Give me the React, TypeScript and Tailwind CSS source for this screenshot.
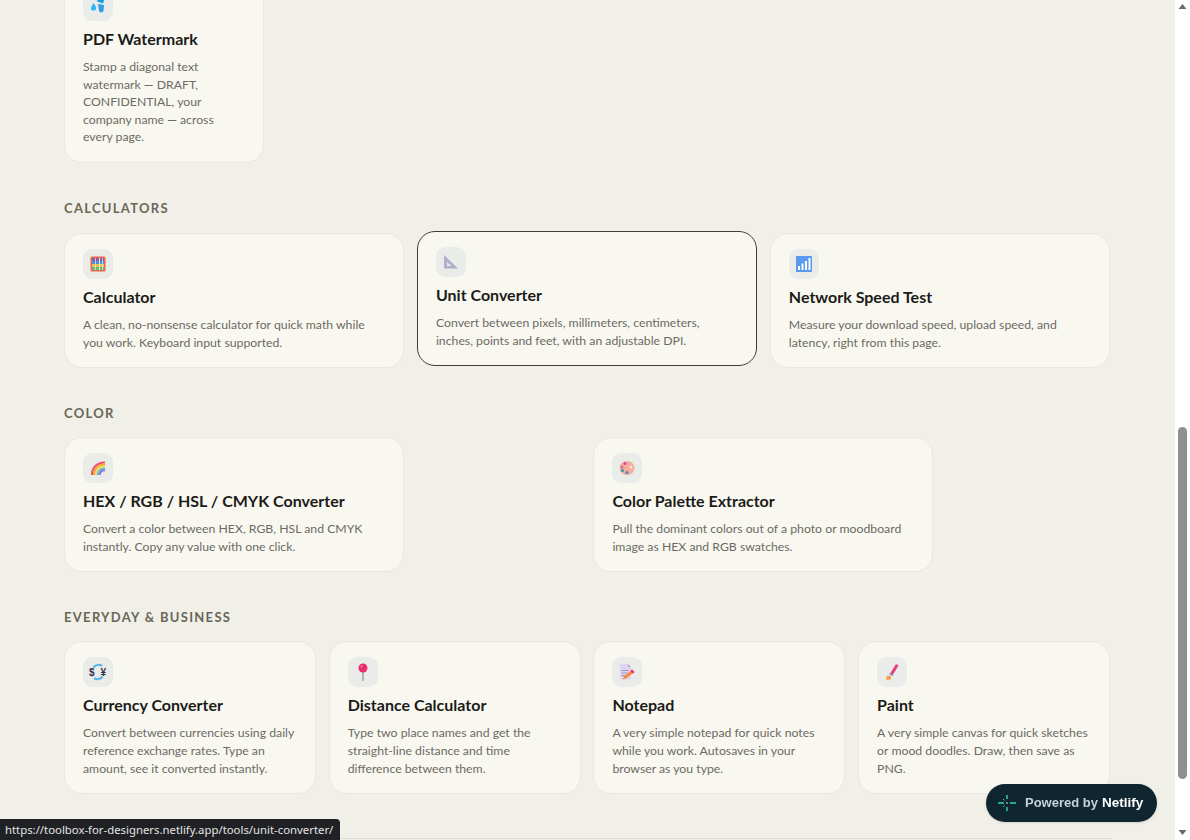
import React from "react";

type Tool = { icon: React.ReactNode; title: string; desc: string; hovered?: boolean };

const Drop = () => (
  <svg width="18" height="18" viewBox="0 0 18 18">
    <path d="M9.500 0 L15.500 1.500 L14 6.500 L8 4.500 Z" fill="#1e9be8" />
    <path d="M4.500 6 C6 8 7.500 10 7 12 C6.500 14 2.500 14 2 12 C1.800 10 3.500 8 4.500 6 Z" fill="#2db4f5" />
    <path d="M9 7 L15 8 L14.500 14 C13.500 16 10.500 15.500 10 14 Z" fill="#2f9fe8" />
  </svg>
);

const Abacus = () => (
  <svg width="16" height="16" viewBox="0 0 16 16">
    <rect x="0.500" y="0.500" width="15" height="15" rx="1.500" fill="#f0654a" />
    <rect x="2" y="2" width="12" height="3" fill="#8c5aa6" />
    <rect x="2" y="5" width="12" height="3" fill="#4a90dc" />
    <rect x="2" y="8" width="12" height="3" fill="#eebf4a" />
    <rect x="2" y="11" width="12" height="3" fill="#67bd78" />
    <rect x="9" y="2" width="1" height="12" fill="#f4ece4" />
    <rect x="5" y="2" width="1" height="12" fill="#f4ece4" opacity="0.700" />
    <rect x="12" y="2" width="1" height="12" fill="#f4ece4" opacity="0.700" />
  </svg>
);

const SetSquare = () => (
  <svg width="16" height="16" viewBox="0 0 16 16">
    <path fillRule="evenodd" d="M1 1 L15 14.500 L1 14.500 Z M4 8 L4 12 L8.500 12 Z" fill="#b0aecb" />
  </svg>
);

const Signal = () => (
  <svg width="16" height="16" viewBox="0 0 16 16">
    <rect width="16" height="16" fill="#5a9bee" />
    <rect x="2" y="10" width="2" height="4" fill="#fff" />
    <rect x="5.500" y="7.500" width="2" height="6.500" fill="#fff" />
    <rect x="9" y="5" width="2" height="9" fill="#fff" />
    <rect x="12.500" y="2" width="2" height="12" fill="#fff" />
  </svg>
);

const Rainbow = () => (
  <svg width="16" height="14" viewBox="0 0 16 14" fill="none">
    <path d="M2 14 A12 12 0 0 1 15 1.500" stroke="#ef4f6c" strokeWidth="2" />
    <path d="M4 14 A10 10 0 0 1 15 3.500" stroke="#f7a23b" strokeWidth="2" />
    <path d="M6 14 A8 8 0 0 1 15 5.500" stroke="#f5dc4a" strokeWidth="2" />
    <path d="M8 14 A6 6 0 0 1 15 7.500" stroke="#58c2dc" strokeWidth="2" />
    <path d="M10 14 A4 4 0 0 1 15 9.500" stroke="#9a6cd8" strokeWidth="2" />
  </svg>
);

const Palette = () => (
  <svg width="16" height="16" viewBox="0 0 16 16">
    <ellipse cx="8" cy="8" rx="7.500" ry="7" fill="#f5ad98" />
    <circle cx="12" cy="7" r="1.500" fill="#fbe8e0" />
    <circle cx="6" cy="3.500" r="1.500" fill="#d447a8" />
    <circle cx="3" cy="7" r="1.500" fill="#d06ab0" />
    <circle cx="3.500" cy="10.500" r="1.500" fill="#2e9e98" />
    <circle cx="8" cy="12.500" r="1.500" fill="#4a80d8" />
  </svg>
);

const Currency = () => (
  <svg width="18" height="18" viewBox="0 0 18 18" fill="none">
    <path d="M4.500 4.500 A6.500 6.500 0 0 1 13 2.800" stroke="#55b4ee" strokeWidth="2.200" />
    <path d="M13.500 13.500 A6.500 6.500 0 0 1 5 15.200" stroke="#55b4ee" strokeWidth="2.200" />
    <text x="0" y="12.500" fontSize="10" fontWeight="700" fontFamily="Liberation Sans, sans-serif" fill="#37304a">$</text>
    <text x="11.500" y="12.500" fontSize="10" fontWeight="700" fontFamily="Liberation Sans, sans-serif" fill="#37304a">¥</text>
  </svg>
);

const Pin = () => (
  <svg width="16" height="18" viewBox="0 0 16 18">
    <rect x="7.200" y="7" width="1.600" height="11" fill="#a3a3ad" />
    <circle cx="8" cy="5" r="4.500" fill="#ec2a6e" />
    <circle cx="6.500" cy="3.500" r="1" fill="#f98aae" />
  </svg>
);

const Memo = () => (
  <svg width="16" height="18" viewBox="0 0 16 18">
    <path d="M1 1 H9 L12 4 V16.500 H1 Z" fill="#ded6ee" />
    <path d="M9 1 L12 4 H9 Z" fill="#b5aad0" />
    <rect x="2.500" y="7" width="7" height="1" fill="#9f8fc8" />
    <rect x="2.500" y="9.500" width="6" height="1" fill="#9f8fc8" />
    <rect x="2.500" y="12" width="4" height="1" fill="#9f8fc8" />
    <path d="M3.500 16.500 L5 13.500 L12.500 7 L15 9.500 L7 15.500 Z" fill="#f58a3c" />
    <path d="M11.500 8 L13 6.500 L15.500 9 L14 10.500 Z" fill="#ec2a6e" />
  </svg>
);

const Brush = () => (
  <svg width="16" height="18" viewBox="0 0 16 18">
    <path d="M6.500 10 L12 1 L14.500 2.500 L9 11.500 Z" fill="#ec3a78" />
    <path d="M5 11 L6.500 9.500 L9.500 11.500 L8.500 13 Z" fill="#8a8a9a" />
    <path d="M2 17 L3 12.500 L7 13 L7 16.500 Z" fill="#f5a04a" />
  </svg>
);

const sections: { name: string; grid: string; headMb: string; tools: Tool[] }[] = [
  {
    name: "Calculators",
    grid: "grid-cols-3",
    headMb: "mb-[17px]",
    tools: [
      { icon: <Abacus />, title: "Calculator", desc: "A clean, no-nonsense calculator for quick math while you work. Keyboard input supported." },
      { icon: <SetSquare />, title: "Unit Converter", desc: "Convert between pixels, millimeters, centimeters, inches, points and feet, with an adjustable DPI.", hovered: true },
      { icon: <Signal />, title: "Network Speed Test", desc: "Measure your download speed, upload speed, and latency, right from this page." },
    ],
  },
  {
    name: "Color",
    grid: "grid-cols-2",
    headMb: "mb-[16px]",
    tools: [
      { icon: <Rainbow />, title: "HEX / RGB / HSL / CMYK Converter", desc: "Convert a color between HEX, RGB, HSL and CMYK instantly. Copy any value with one click." },
      { icon: <Palette />, title: "Color Palette Extractor", desc: "Pull the dominant colors out of a photo or moodboard image as HEX and RGB swatches." },
    ],
  },
  {
    name: "Everyday & Business",
    grid: "grid-cols-4",
    headMb: "mb-[16px]",
    tools: [
      { icon: <Currency />, title: "Currency Converter", desc: "Convert between currencies using daily reference exchange rates. Type an amount, see it converted instantly." },
      { icon: <Pin />, title: "Distance Calculator", desc: "Type two place names and get the straight-line distance and time difference between them." },
      { icon: <Memo />, title: "Notepad", desc: "A very simple notepad for quick notes while you work. Autosaves in your browser as you type." },
      { icon: <Brush />, title: "Paint", desc: "A very simple canvas for quick sketches or mood doodles. Draw, then save as PNG." },
    ],
  },
];

function ToolCard({ tool, className }: { tool: Tool; className: string }) {
  return (
    <div
      className={`rounded-[18px] border bg-[#f8f8f1] px-[18px] pt-[15px] pb-[16px] ${
        tool.hovered ? "-translate-y-[2px] border-[#3f3d38]" : "border-[#e9e8de]"
      } ${className}`}
    >
      <div className="mb-[6px] flex h-[30px] w-[30px] items-center justify-center rounded-[9px] bg-[#e9ece8]">{tool.icon}</div>
      <h3 className="mb-[7px] text-[16px] leading-[24px] font-bold text-[#1c1b18]">{tool.title}</h3>
      <p className="text-[12.250px] leading-[17.600px] text-[#6d6a62]">{tool.desc}</p>
    </div>
  );
}

export default function App() {
  return (
    <div className="flex h-screen overflow-hidden bg-[#f0f0e8] font-['Lato','Noto_Sans',sans-serif]">
      <main className="min-w-0 flex-1 pr-[65px] pl-[64px]">
        <ToolCard
          className="-mt-[25px] w-[200px]"
          tool={{
            icon: <Drop />,
            title: "PDF Watermark",
            desc: "Stamp a diagonal text watermark — DRAFT, CONFIDENTIAL, your company name — across every page.",
          }}
        />
        {sections.map((s) => (
          <section key={s.name} className="mt-[37px]">
            <h2 className={`text-[13px] leading-[16px] font-bold tracking-[0.1em] text-[#6b6658] uppercase ${s.headMb}`}>{s.name}</h2>
            <div className={`grid gap-[12.800px] ${s.grid}`}>
              {s.tools.map((t) => (
                <ToolCard key={t.title} tool={t} className={s.grid === "grid-cols-2" ? "max-w-[340px]" : ""} />
              ))}
            </div>
          </section>
        ))}
        <div className="mt-[44px] -mr-[1px] border-t border-[#dcdad1]" />
      </main>

      <div className="flex w-[15px] shrink-0 flex-col items-center bg-white py-[2px]">
        <svg width="9" height="7" viewBox="0 0 9 7" className="mt-[1px]">
          <path d="M4.500 1 L8.500 6 H0.500 Z" fill="#6b6b6b" />
        </svg>
        <div className="mt-[417px] h-[352px] w-[9px] rounded-full bg-[#8f8f8f]" />
        <svg width="9" height="7" viewBox="0 0 9 7" className="mt-auto mb-[2px]">
          <path d="M4.500 6 L8.500 1 H0.500 Z" fill="#6b6b6b" />
        </svg>
      </div>

      <div className="fixed right-[33px] bottom-[18px] flex h-[38px] w-[171px] items-center rounded-full bg-[#0f2630] pl-[11px] font-['Liberation_Sans',sans-serif] text-[13px] font-bold shadow-sm">
        <svg width="20" height="18" viewBox="0 0 20 18" className="mr-[8px]" stroke="#2fd3c5" strokeWidth="1.400">
          <path d="M10 1 V5 M10 13 V17 M1 9 H7 M13 9 H19" />
          <path d="M6 5 L7.500 6.500 M6 13 L7.500 11.500" strokeWidth="1" />
          <circle cx="10" cy="9" r="0.800" fill="#fff" stroke="none" />
        </svg>
        <span className="text-[#c5d3d8]">Powered by</span>
        <span className="ml-[4px] text-[13.500px] text-white">Netlify</span>
      </div>

      <div className="fixed bottom-0 left-0 flex h-[21px] items-center rounded-tr-[4px] bg-[#202124] pr-[7px] pl-[5px] font-['Noto_Sans',sans-serif] text-[11.350px] text-[#e3e3e3]">
        https://toolbox-for-designers.netlify.app/tools/unit-converter/
      </div>
    </div>
  );
}
